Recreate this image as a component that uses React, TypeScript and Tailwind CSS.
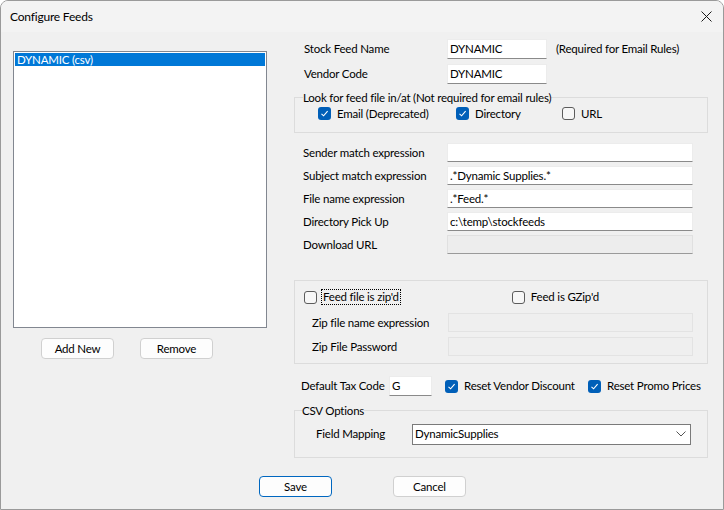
import React from "react";

function Check({ checked }: { checked: boolean }) {
  return checked ? (
    <span className="w-[13px] h-[13px] rounded-[3px] bg-[#005fb8] flex items-center justify-center shrink-0">
      <svg width="9" height="9" viewBox="0 0 9 9">
        <path d="M1.5 4.8 L3.6 6.8 L7.6 2.2" fill="none" stroke="white" strokeWidth="1.1" />
      </svg>
    </span>
  ) : (
    <span className="w-[13px] h-[13px] rounded-[3px] bg-[#f7f7f7] border border-[#5c5c5c] shrink-0" />
  );
}

function TextBox({ value = "", w, disabled = false, className = "" }: { value?: string; w: string; disabled?: boolean; className?: string }) {
  return (
    <div
      className={`${w} h-[19px] flex items-center pl-[2px] border whitespace-nowrap shrink-0 ${
        disabled ? "bg-[#efefef] border-[#e3e3e3]" : "bg-white border-[#ececec] border-b-[#8a8a8a]"
      } ${className}`}
    >
      {value}
    </div>
  );
}

function Btn({ label, primary = false, w = "w-[73px]" }: { label: string; primary?: boolean; w?: string }) {
  return (
    <div
      className={`${w} h-[21px] rounded-[4px] bg-[#fdfdfd] flex items-center justify-center border ${
        primary ? "border-[#0067c0]" : "border-[#d0d0d0]"
      }`}
    >
      {label}
    </div>
  );
}

export default function App() {
  return (
    <div className="w-[724px] h-[510px] bg-[#f0f0f0] border border-[#9a9a9a] rounded-t-[8px] overflow-hidden flex flex-col text-[11.5px] tracking-[-0.2px] text-black font-['Lato',sans-serif] leading-none whitespace-nowrap">
      {/* title bar */}
      <div className="h-[31px] bg-[#f3f3f3] flex items-center justify-between shrink-0">
        <span className="pl-[9px] text-[12px]">Configure Feeds</span>
        <svg width="11" height="11" viewBox="0 0 11 11" className="mr-[11px]">
          <path d="M0.5 0.5 L10.5 10.5 M10.5 0.5 L0.5 10.5" stroke="#1a1a1a" strokeWidth="1" />
        </svg>
      </div>

      {/* body */}
      <div className="flex-1 flex flex-col">
        <div className="flex">
          {/* left column */}
          <div className="flex flex-col pl-[12px] pt-[19px] w-[293px]">
            <div className="w-[254px] h-[277px] bg-white border border-[#828790] p-[1px]">
              <div className="h-[13px] bg-[#0078d7] text-white flex items-center pl-[2px]">DYNAMIC (csv)</div>
            </div>
            <div className="flex mt-[10px] pl-[28px] gap-[26px]">
              <Btn label="Add New" />
              <Btn label="Remove" />
            </div>
          </div>

          {/* right column */}
          <div className="w-[414px] flex flex-col pt-[7px]">
            <div className="flex items-center h-[20px]">
              <span className="w-[153px] pl-[10px]">Stock Feed Name</span>
              <TextBox value="DYNAMIC" w="w-[100px]" className="h-[20px]" />
              <span className="ml-[9px]">(Required for Email Rules)</span>
            </div>
            <div className="flex items-center h-[20px] mt-[5px]">
              <span className="w-[153px] pl-[10px]">Vendor Code</span>
              <TextBox value="DYNAMIC" w="w-[100px]" className="h-[20px]" />
            </div>

            <fieldset className="mt-[8px] border border-[#dcdcdc] h-[41px] flex">
              <legend className="ml-[8px] px-0">Look for feed file in/at (Not required for email rules)</legend>
              <div className="flex items-center mt-[3px] h-[14px] pl-[23px]">
                <Check checked />
                <span className="ml-[6px] w-[119px]">Email (Deprecated)</span>
                <Check checked />
                <span className="ml-[6px] w-[87px]">Directory</span>
                <Check checked={false} />
                <span className="ml-[6px]">URL</span>
              </div>
            </fieldset>

            <div className="flex flex-col gap-[4px] mt-[10px]">
              {[
                ["Sender match expression", ""],
                ["Subject match expression", ".*Dynamic Supplies.*"],
                ["File name expression", ".*Feed.*"],
                ["Directory Pick Up", "c:\\temp\\stockfeeds"],
              ].map(([l, v]) => (
                <div key={l} className="flex items-center h-[19px]">
                  <span className="w-[153px] pl-[9px]">{l}</span>
                  <TextBox value={v} w="w-[246px]" />
                </div>
              ))}
              <div className="flex items-center h-[19px]">
                <span className="w-[153px] pl-[9px]">Download URL</span>
                <div className="w-[246px] h-[19px] bg-[#ededed] border border-[#e0e0e0] border-b-[#9a9a9a]" />
              </div>
            </div>

            <div className="mt-[26px] border border-[#dcdcdc] h-[84px] flex flex-col">
              <div className="flex items-center mt-[9px] pl-[9px] h-[14px]">
                <Check checked={false} />
                <span className="ml-[5px] px-[1px] py-[1px] outline outline-1 outline-dotted outline-black">Feed file is zip'd</span>
                <span className="ml-[112px]" />
                <Check checked={false} />
                <span className="ml-[6px]">Feed is GZip'd</span>
              </div>
              <div className="flex items-center h-[19px] mt-[9px]">
                <span className="w-[153px] pl-[17px]">Zip file name expression</span>
                <TextBox w="w-[245px]" disabled />
              </div>
              <div className="flex items-center h-[19px] mt-[5px]">
                <span className="w-[153px] pl-[17px]">Zip File Password</span>
                <TextBox w="w-[245px]" disabled />
              </div>
            </div>

            <div className="flex items-center h-[20px] mt-[12px]">
              <span className="w-[95px] pl-[7px]">Default Tax Code</span>
              <TextBox value="G" w="w-[43px]" className="h-[20px]" />
              <span className="ml-[13px]" />
              <Check checked />
              <span className="ml-[6px] w-[124px]">Reset Vendor Discount</span>
              <Check checked />
              <span className="ml-[6px]">Reset Promo Prices</span>
            </div>

            <fieldset className="mt-[9px] border border-[#dcdcdc] h-[53px] flex">
              <legend className="ml-[7px] px-0">CSV Options</legend>
              <div className="flex items-center h-[21px] mt-[7px]">
                <span className="w-[117px] pl-[21px]">Field Mapping</span>
                <div className="w-[279px] h-[21px] bg-white border border-[#7a7a7a] flex items-center justify-between pl-[2px] pr-[4px]">
                  <span>DynamicSupplies</span>
                  <svg width="10" height="6" viewBox="0 0 10 6">
                    <path d="M0.5 0.5 L5 5 L9.5 0.5" fill="none" stroke="#555" strokeWidth="1" />
                  </svg>
                </div>
              </div>
            </fieldset>
          </div>
        </div>

        {/* bottom buttons */}
        <div className="flex mt-[18px] pl-[258px] gap-[61px]">
          <Btn label="Save" primary />
          <Btn label="Cancel" />
        </div>
      </div>
    </div>
  );
}
